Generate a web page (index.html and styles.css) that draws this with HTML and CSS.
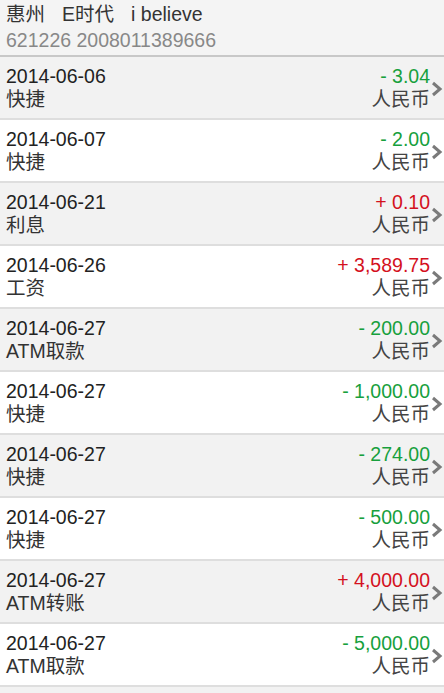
FILE: index.html
```html
<!DOCTYPE html>
<html>
<head>
<meta http-equiv="Content-Type" content="text/html; charset=utf-8"/>
<title>交易明细</title>
<link rel="stylesheet" href="styles.css">
</head>
<body>
<div class="header">
  <div class="title"><span>惠州</span><span>E时代</span><span>i believe</span></div>
  <div class="card">621226 2008011389666</div>
</div>

<div class="list">
  <div class="row">
    <div class="left"><div class="date">2014-06-06</div><div class="type">快捷</div></div>
    <div class="right"><div class="amount out">- 3.04</div><div class="cur">人民币</div></div>
    <svg class="arrow" width="12" height="16" viewBox="0 0 12 16"><polyline points="2,2 9,8 2,14" /></svg>
  </div>
  <div class="row">
    <div class="left"><div class="date">2014-06-07</div><div class="type">快捷</div></div>
    <div class="right"><div class="amount out">- 2.00</div><div class="cur">人民币</div></div>
    <svg class="arrow" width="12" height="16" viewBox="0 0 12 16"><polyline points="2,2 9,8 2,14" /></svg>
  </div>
  <div class="row">
    <div class="left"><div class="date">2014-06-21</div><div class="type">利息</div></div>
    <div class="right"><div class="amount in">+ 0.10</div><div class="cur">人民币</div></div>
    <svg class="arrow" width="12" height="16" viewBox="0 0 12 16"><polyline points="2,2 9,8 2,14" /></svg>
  </div>
  <div class="row">
    <div class="left"><div class="date">2014-06-26</div><div class="type">工资</div></div>
    <div class="right"><div class="amount in">+ 3,589.75</div><div class="cur">人民币</div></div>
    <svg class="arrow" width="12" height="16" viewBox="0 0 12 16"><polyline points="2,2 9,8 2,14" /></svg>
  </div>
  <div class="row">
    <div class="left"><div class="date">2014-06-27</div><div class="type">ATM取款</div></div>
    <div class="right"><div class="amount out">- 200.00</div><div class="cur">人民币</div></div>
    <svg class="arrow" width="12" height="16" viewBox="0 0 12 16"><polyline points="2,2 9,8 2,14" /></svg>
  </div>
  <div class="row">
    <div class="left"><div class="date">2014-06-27</div><div class="type">快捷</div></div>
    <div class="right"><div class="amount out">- 1,000.00</div><div class="cur">人民币</div></div>
    <svg class="arrow" width="12" height="16" viewBox="0 0 12 16"><polyline points="2,2 9,8 2,14" /></svg>
  </div>
  <div class="row">
    <div class="left"><div class="date">2014-06-27</div><div class="type">快捷</div></div>
    <div class="right"><div class="amount out">- 274.00</div><div class="cur">人民币</div></div>
    <svg class="arrow" width="12" height="16" viewBox="0 0 12 16"><polyline points="2,2 9,8 2,14" /></svg>
  </div>
  <div class="row">
    <div class="left"><div class="date">2014-06-27</div><div class="type">快捷</div></div>
    <div class="right"><div class="amount out">- 500.00</div><div class="cur">人民币</div></div>
    <svg class="arrow" width="12" height="16" viewBox="0 0 12 16"><polyline points="2,2 9,8 2,14" /></svg>
  </div>
  <div class="row">
    <div class="left"><div class="date">2014-06-27</div><div class="type">ATM转账</div></div>
    <div class="right"><div class="amount in">+ 4,000.00</div><div class="cur">人民币</div></div>
    <svg class="arrow" width="12" height="16" viewBox="0 0 12 16"><polyline points="2,2 9,8 2,14" /></svg>
  </div>
  <div class="row">
    <div class="left"><div class="date">2014-06-27</div><div class="type">ATM取款</div></div>
    <div class="right"><div class="amount out">- 5,000.00</div><div class="cur">人民币</div></div>
    <svg class="arrow" width="12" height="16" viewBox="0 0 12 16"><polyline points="2,2 9,8 2,14" /></svg>
  </div>
</div>
</body>
</html>
```
FILE: styles.css
```css
body {
  margin: 0;
  background-color: #f2f2f2;
  font-family: "Liberation Sans", "Noto Sans CJK SC", sans-serif;
  font-size: 19.5px;
  color: #222;
}

.header {
  padding: 1px 6px 2px;
  background-color: #f4f4f4;
  border-bottom: 2px solid #c8c8c8;
  line-height: 26px;
}

.title {
  display: flex;
  gap: 17px;
  color: #333;
}

.card {
  color: #888;
}

.row {
  display: flex;
  align-items: center;
  height: 61px;
  padding-left: 6px;
  background-color: #f2f2f2;
  border-bottom: 2px solid #dedede;
  line-height: 23px;
}

.row:nth-child(even) {
  background-color: #fff;
}

.left {
  flex: 1;
}

.type {
  color: #333;
}

.right {
  text-align: right;
}

.amount.out {
  color: #17a03d;
}

.amount.in {
  color: #d4111e;
}

.cur {
  color: #444;
}

.arrow {
  margin: 3px 1px 0 1px;
}

.arrow polyline {
  fill: none;
  stroke: #7a7a7a;
  stroke-width: 3;
}
```
